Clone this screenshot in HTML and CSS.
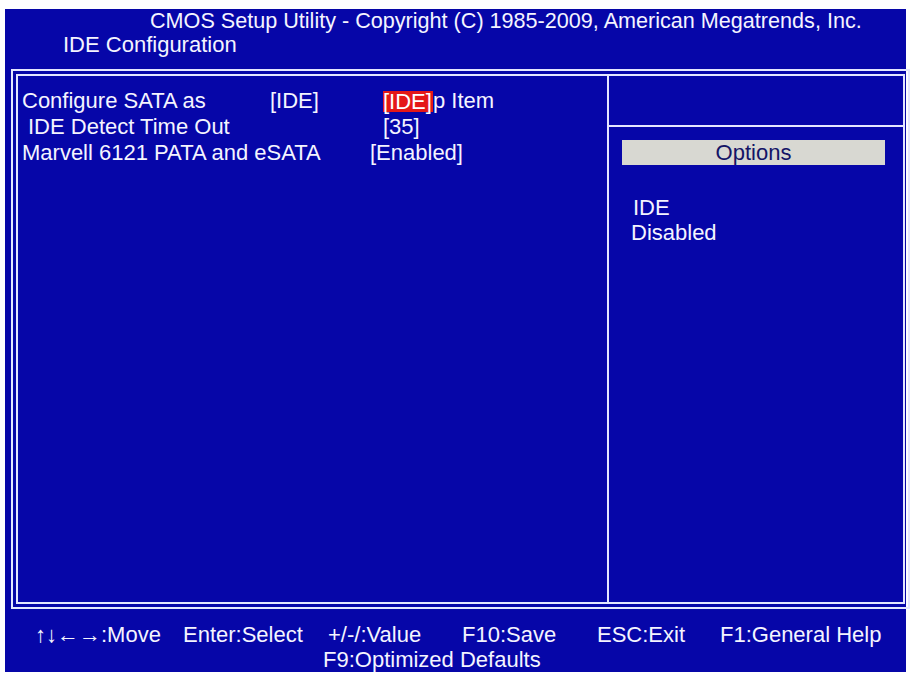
FILE: index.html
```html
<!DOCTYPE html>
<html lang="en">
<head>
  <meta charset="UTF-8">
  <meta name="viewport" content="width=device-width, initial-scale=1.0">
  <title>CMOS Setup Utility - IDE Configuration</title>
  <link rel="stylesheet" href="styles.css">
</head>
<body>
  <div class="screen">
    <header class="top">
      <div class="title">CMOS Setup Utility - Copyright (C) 1985-2009, American Megatrends, Inc.</div>
      <div class="subtitle">IDE Configuration</div>
    </header>

    <div class="frame">
      <div class="frame-inner">
        <section class="items">
          <div class="row">
            <span class="label label-1">Configure SATA as</span>
            <span class="value value-1">[IDE]</span>
            <span class="help-item">Help Item<span class="selected">[IDE]</span></span>
          </div>
          <div class="row">
            <span class="label label-2">IDE Detect Time Out</span>
            <span class="value">[35]</span>
          </div>
          <div class="row">
            <span class="label label-3">Marvell 6121 PATA and eSATA</span>
            <span class="value">[Enabled]</span>
          </div>
        </section>

        <aside class="side">
          <div class="side-top"></div>
          <div class="options">Options</div>
          <ul class="option-list">
            <li class="opt-ide">IDE</li>
            <li>Disabled</li>
          </ul>
        </aside>
      </div>
    </div>

    <footer class="keys">
      <div class="keys-row">
        <span class="k1">&uarr;&darr;&larr;&rarr;:Move</span>
        <span class="k2">Enter:Select</span>
        <span class="k3">+/-/:Value</span>
        <span class="k4">F10:Save</span>
        <span class="k5">ESC:Exit</span>
        <span class="k6">F1:General Help</span>
      </div>
      <div class="keys-row2">F9:Optimized Defaults</div>
    </footer>
  </div>
</body>
</html>
```

FILE: styles.css
```css
body {
  margin: 0;
  background: #ffffff;
  font-family: "Liberation Sans", Arial, sans-serif;
  font-size: 22px;
  color: #f4f4ff;
}
.screen {
  margin: 9px 0 0 5px;
  width: 901px;
  height: 663px;
  background: #0606a8;
  display: flex;
  flex-direction: column;
}

/* header */
.top {
  height: 60px;
  line-height: 24px;
}
.title {
  padding-left: 145px;
  font-size: 21.6px;
}
.subtitle {
  padding-left: 58px;
}

/* double line frame */
.frame {
  margin-left: 6px;
  width: 889px;
  height: 530px;
  border: 2px solid #e4e6ff;
  padding: 3px;
  box-sizing: content-box;
}
.frame-inner {
  height: 526px;
  border: 2px solid #e4e6ff;
  display: flex;
}

/* left list */
.items {
  width: 585px;
  padding: 12px 0 0 4px;
  line-height: 26px;
}
.row {
  display: flex;
  white-space: nowrap;
}
.label-1 {
  width: 248px;
}
.value-1 {
  width: 130px;
}
.label-2 {
  width: 355px;
  padding-left: 6px;
}
.label-3 {
  width: 348px;
}
.help-item {
  position: relative;
}
.selected {
  position: absolute;
  left: -17px;
  top: 3px;
  height: 21px;
  width: 50px;
  line-height: 21px;
  background: #e41818;
  color: #ffffff;
}

/* right help panel */
.side {
  flex: 1;
  border-left: 2px solid #e4e6ff;
}
.side-top {
  height: 49px;
  border-bottom: 2px solid #e4e6ff;
}
.options {
  margin: 13px 0 0 13px;
  width: 263px;
  height: 25px;
  line-height: 25px;
  background: #d8d8d2;
  color: #141466;
  text-align: center;
}
.option-list {
  list-style: none;
  margin: 30px 0 0;
  padding: 0 0 0 22px;
  line-height: 25px;
}
.opt-ide {
  padding-left: 2px;
}

/* key help */
.keys {
  padding-top: 13px;
  line-height: 25px;
}
.keys-row {
  display: flex;
  padding-left: 30px;
  white-space: nowrap;
}
.k1 { width: 148px; }
.k2 { width: 145px; }
.k3 { width: 134px; }
.k4 { width: 135px; }
.k5 { width: 123px; }
.keys-row2 {
  padding-left: 318px;
}
```
